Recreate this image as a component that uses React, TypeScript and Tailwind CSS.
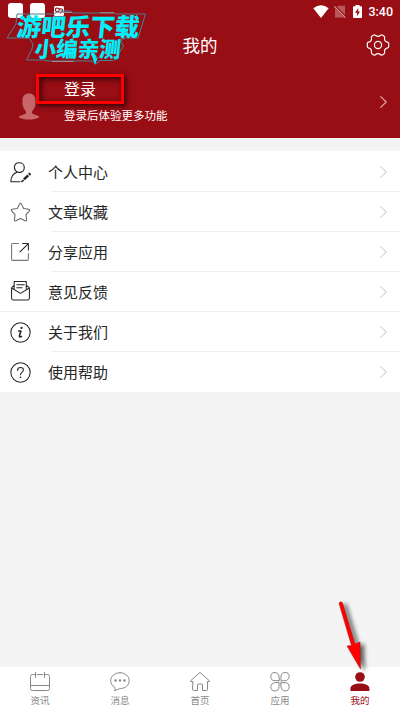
import React from 'react';

type IconProps = { className?: string };

const line = {
  fill: 'none',
  stroke: 'currentColor',
  strokeLinecap: 'round' as const,
  strokeLinejoin: 'round' as const,
};

const ProfileIcon: React.FC<IconProps> = ({ className }) => (
  <svg className={className} viewBox="0 0 20 20" {...line} strokeWidth="1.1">
    <path d="M7 9.5C5.2 8.6 4.2 7.2 4.2 5.2C4.2 2.5 6.2.7 8.9.7C11.6.7 13.6 2.6 13.6 5.2C13.6 8 11.6 9.9 8.9 9.9C8.2 9.9 7.6 9.8 7 9.5C3 11 .8 14 .8 18.8H9.5" />
    <path d="M13.3 16.6L17.3 12.8M18 12.1L19.4 10.8" strokeWidth="2.4" strokeLinecap="butt" />
    <path d="M11.2 18.6L12.6 17.4" strokeWidth="1.5" />
  </svg>
);

const StarIcon: React.FC<IconProps> = ({ className }) => (
  <svg className={className} viewBox="0 0 20 20" {...line} stroke="#666" strokeWidth="1">
    <path d="M9.2 1.8Q10 .7 10.8 1.8L13 6.2L17.8 7Q19.4 7.4 18.5 8.4L15.2 12L15.8 17Q15.8 18.4 14.5 17.9L10 15.8L5.5 17.9Q4.2 18.4 4.2 17L4.8 12L1.5 8.4Q.6 7.4 2.2 7L7 6.2Z" />
  </svg>
);

const ShareIcon: React.FC<IconProps> = ({ className }) => (
  <svg className={className} viewBox="0 0 20 20" {...line} strokeWidth="1">
    <path d="M8 1.5H2.5Q1.5 1.5 1.5 2.5V16.5Q1.5 17.5 2.5 17.5H16.5Q17.5 17.5 17.5 16.5V11" stroke="#777" />
    <path d="M9.5 9.5L17.5 1.5M12 1.5H17.5V7.5" />
  </svg>
);

const MailIcon: React.FC<IconProps> = ({ className }) => (
  <svg className={className} viewBox="0 0 20 20" {...line} strokeWidth="1">
    <path d="M4 7.5V.5H15.5V7.5M4 4L1.5 6.5V16.5Q1.5 18 3 18H17Q18.5 18 18.5 16.5V6.5L15.5 4M1.5 6.7L10 11.8L18.5 6.7M6.5 3.5H13.5M6.5 6.5H11.5" />
  </svg>
);

const InfoIcon: React.FC<IconProps> = ({ className }) => (
  <svg className={className} viewBox="0 0 20 20" {...line} strokeWidth="1">
    <circle cx="10" cy="10" r="9.2" />
    <path d="M8.3 8.5H10.4L8.9 13.5Q8.7 14.7 11 13.9" strokeWidth="1.5" />
    <circle cx="11" cy="5.6" r="1.1" fill="currentColor" stroke="none" />
  </svg>
);

const HelpIcon: React.FC<IconProps> = ({ className }) => (
  <svg className={className} viewBox="0 0 20 20" {...line} strokeWidth="1">
    <circle cx="10" cy="10" r="9.2" />
    <path d="M7.2 8Q7.2 5.2 10 5.2Q12.8 5.2 12.8 7.7C12.8 9.6 10 9.7 10 12.2" />
    <circle cx="10" cy="14.5" r=".8" fill="currentColor" stroke="none" />
  </svg>
);

const CalendarIcon: React.FC<IconProps> = ({ className }) => (
  <svg className={className} viewBox="0 0 20 20" {...line} strokeWidth="1">
    <path d="M4.5 2.5H2.5Q.5 2.5 .5 4.5V16.5Q.5 18.5 2.5 18.5H17.5Q19.5 18.5 19.5 16.5V4.5Q19.5 2.5 17.5 2.5H15.5M7 2.5H13M5.5.5V5.5M14.5.5V5.5M.5 13.5H19.5" />
  </svg>
);

const ChatIcon: React.FC<IconProps> = ({ className }) => (
  <svg className={className} viewBox="0 0 20 20" {...line} strokeWidth="1">
    <path d="M10 .7C15.2 .7 19.2 4.2 19.2 8.7C19.2 13.2 15.2 16.5 10.5 16.5C8 17.2 6.5 18.2 4.4 18.5C5 17.2 5.2 16.3 4.7 15.2C2.2 13.7 .7 11.5 .7 8.7C.7 4.2 4.8 .7 10 .7Z" />
    <g fill="currentColor" stroke="none">
      <circle cx="5.5" cy="8.5" r="1.2" />
      <circle cx="10" cy="8.5" r="1.2" />
      <circle cx="14.5" cy="8.5" r="1.2" />
    </g>
  </svg>
);

const HomeIcon: React.FC<IconProps> = ({ className }) => (
  <svg className={className} viewBox="0 0 20 20" {...line} strokeWidth="1">
    <path d="M2.5 9.5H.8Q0 9.5 .6 8.8L9.3 .9Q10 .4 10.7 .9L19.4 8.8Q20 9.5 19.2 9.5H17.5V17.5Q17.5 18.5 16.5 18.5H12.5V13Q12.5 12 11.5 12H8.5Q7.5 12 7.5 13V18.5H3.5Q2.5 18.5 2.5 17.5Z" />
  </svg>
);

const AppsIcon: React.FC<IconProps> = ({ className }) => (
  <svg className={className} viewBox="0 0 20 20" {...line} strokeWidth="1">
    <path d="M9 8.7H4.9A4.1 4.1 0 1 1 9 4.6Z M11 8.7V4.6A4.1 4.1 0 1 1 15.1 8.7Z M9 10.7V14.8A4.1 4.1 0 1 1 4.9 10.7Z M11 10.7H15.1A4.1 4.1 0 1 1 11 14.8Z" />
  </svg>
);

const UserIcon: React.FC<IconProps> = ({ className }) => (
  <svg className={className} viewBox="0 0 20 20" fill="currentColor">
    <circle cx="10" cy="5" r="4.8" />
    <path d="M.4 19V16.5C.4 13.3 5 11.5 10 11.5C15 11.5 19.4 13.3 19.4 16.5V19Z" />
  </svg>
);

const GearIcon: React.FC<IconProps> = ({ className }) => (
  <svg className={className} viewBox="0 0 24 24" {...line} strokeWidth="1.2">
    <circle cx="12" cy="12" r="3.6" />
    <path d="M7.6 2.1Q8.5 1.4 9.3 2.2Q12 4.6 14.7 2.2Q15.5 1.4 16.4 2.1L18.1 3.2Q18.9 3.8 18.6 4.8Q18 8.4 21.6 9.2Q22.7 9.5 22.7 10.5V13.5Q22.7 14.5 21.6 14.8Q18 15.6 18.6 19.2Q18.9 20.2 18.1 20.8L16.4 21.9Q15.5 22.6 14.7 21.8Q12 19.4 9.3 21.8Q8.5 22.6 7.6 21.9L5.9 20.8Q5.1 20.2 5.4 19.2Q6 15.6 2.4 14.8Q1.3 14.5 1.3 13.5V10.5Q1.3 9.5 2.4 9.2Q6 8.4 5.4 4.8Q5.1 3.8 5.9 3.2Z" />
  </svg>
);

const Chevron: React.FC<IconProps> = ({ className }) => (
  <svg className={className} viewBox="0 0 7 12" {...line} strokeWidth="1.1">
    <path d="M.7 .7L6.2 6L.7 11.3" />
  </svg>
);

const menu = [
  { label: '个人中心', Icon: ProfileIcon },
  { label: '文章收藏', Icon: StarIcon },
  { label: '分享应用', Icon: ShareIcon },
  { label: '意见反馈', Icon: MailIcon, fullDivider: true },
  { label: '关于我们', Icon: InfoIcon },
  { label: '使用帮助', Icon: HelpIcon },
];

const tabs = [
  { label: '资讯', Icon: CalendarIcon },
  { label: '消息', Icon: ChatIcon },
  { label: '首页', Icon: HomeIcon },
  { label: '应用', Icon: AppsIcon },
  { label: '我的', Icon: UserIcon, active: true },
];

const StatusBar = () => (
  <div className="flex h-6 items-start justify-between pt-[3px] pr-[7px] pl-2">
    <div className="flex gap-[7px]">
      <span className="size-[15px] rounded-[3px] bg-white" />
      <span className="size-[15px] rounded-[3px] bg-white" />
      <svg className="mt-[3px] ml-0.5 size-[10px]" viewBox="0 0 10 10">
        <rect width="10" height="10" rx="1.5" fill="#fff" />
        <path d="M4.5 5.5C1 7 .5 2 3 2Q5 2 6 4M5 4C7 1 10 4 8 6Q6 8 4 5" fill="none" stroke="#990d15" strokeWidth="1.2" />
      </svg>
    </div>
    <div className="flex items-center pt-px">
      <svg className="h-[13px] w-4" viewBox="0 0 16 13" fill="#fff">
        <path d="M8 13L.3 3.2Q8-2.6 15.7 3.2Z" />
      </svg>
      <svg className="ml-[5px] h-[13px] w-3" viewBox="0 0 12 13">
        <path d="M4 .8H11V12.5H1V4Z" fill="#fff" opacity=".3" />
        <path d="M.3 .8L11.7 12.5" stroke="#990d15" strokeWidth="2.5" />
        <path d="M.3 1.3L11.3 12.7" stroke="#d69c9f" strokeWidth="1.1" />
      </svg>
      <svg className="ml-[7px] h-[13px] w-[9px]" viewBox="0 0 9 13">
        <path d="M2.5 0H6.5V1.3H8Q9 1.3 9 2.3V12Q9 13 8 13H1Q0 13 0 12V2.3Q0 1.3 1 1.3H2.5Z" fill="#fff" />
        <path d="M5.3 3L2 7.8H4.1V11.3L7 6.5H5.1Z" fill="#990d15" />
      </svg>
      <span className="ml-1.5 font-['Roboto',sans-serif] text-[12.5px] leading-[15px] font-medium">3:40</span>
    </div>
  </div>
);

const Watermark = () => (
  <div className="absolute top-[10px] left-[6px] h-[56px] w-[142px] font-black whitespace-nowrap text-[#00f0fb]">
    <svg className="absolute inset-0 size-full" viewBox="0 0 142 56" fill="none" stroke="#4f7f92" strokeWidth="1">
      <path d="M11 4H48L52 1H64L67 3H92L96 2.5H107L110 4H139.5L132 28H119L114.5 31L117.5 36L113 43L112 49L106 50.5H94L90 54L86 51H42L38 50H20.5L26 39L27 34L23 28H1L8 17L10 14Z" />
      <path d="M50 2.5H66M94 3H108M46 51.5H68" stroke="#a48a94" />
    </svg>
    <span className="absolute top-[1px] left-[10.5px] -skew-x-6 text-[24.5px] leading-[29px]">游吧乐下载</span>
    <span className="absolute top-[25px] left-[28.5px] -skew-x-6 text-[21.5px] leading-[26px]">小编亲测</span>
    <svg className="absolute top-[43px] left-[85px] h-3 w-[7px]" viewBox="0 0 7 12" fill="currentColor">
      <path d="M0 0H3L5 5L7 4L4 12Z" />
    </svg>
  </div>
);

const Pointer = () => (
  <svg className="pointer-events-none absolute top-[590px] left-[325px] h-[90px] w-[60px] drop-shadow-[4px_2px_2px_rgba(0,0,0,0.6)]" viewBox="0 0 60 90">
    <path d="M14 13.2Q15.5 10.5 17.5 12.7L30 54L35 52L35.5 79L22 56L26.5 55.5Z" fill="#fe0000" stroke="#a91414" strokeWidth=".5" />
  </svg>
);

const App: React.FC = () => {
  return (
    <div className="relative flex h-[712px] w-[400px] flex-col overflow-hidden bg-[#f4f4f4] font-['Noto_Sans_CJK_SC',sans-serif]">
      <header className="h-[138px] shrink-0 bg-[#990d15] text-white">
        <StatusBar />
        <div className="grid h-[42px] grid-cols-[1fr_auto_1fr] items-center px-[10px]">
          <h1 className="col-start-2 text-[17.5px] leading-6 font-normal">我的</h1>
          <GearIcon className="size-6 justify-self-end" />
        </div>
        <div className="flex h-[72px] items-center pr-[13px] pl-[18px]">
          <svg className="mt-2 h-[27px] w-[22px] shrink-0" viewBox="0 0 22 27" fill="#c7676b">
            <path d="M11 .5C7 .5 4.5 3 4.5 7V11C4.7 14 6.5 17 8 18.5V20C6.5 22 2 22 .5 24C3 26 7 26.5 11 26.5C15 26.5 19 26 21.5 24C20 22 15.5 22 14 20V18.5C15.5 17 17.3 14 17.5 11V7C17.5 3 15 .5 11 .5Z" />
          </svg>
          <div className="mb-[4px] ml-6 flex flex-1 flex-col">
            <span className="text-base leading-6">登录</span>
            <span className="mt-[6px] text-[11.5px] leading-[18px]">登录后体验更多功能</span>
          </div>
          <Chevron className="h-3 w-[7px] text-[#e0b0b3]" />
        </div>
      </header>

      <main className="mt-[13px] flex flex-1 flex-col">
        <ul className="bg-white pt-px">
          {menu.map(({ label, Icon, fullDivider }, i) => (
            <li
              key={label}
              className={`flex h-10 items-center pl-[10px] text-[#262626] ${
                fullDivider ? 'border-b border-[#f0f0f0]' : ''
              }`}
            >
              <Icon className="size-[21px] shrink-0" />
              <div className="ml-[17px] flex h-full flex-1 flex-col">
                <div className="flex flex-1 items-center justify-between pr-[13px]">
                  <span className="text-[15px] leading-5">{label}</span>
                  <Chevron className="h-3 w-[7px] text-[#d5d5d5]" />
                </div>
                {i < menu.length - 1 && !fullDivider && <div className="ml-[3px] h-px bg-[#f0f0f0]" />}
              </div>
            </li>
          ))}
        </ul>
      </main>

      <nav className="grid h-[45px] shrink-0 grid-cols-5 bg-white">
        {tabs.map(({ label, Icon, active }) => (
          <div
            key={label}
            className={`flex flex-col items-center pt-[5px] ${active ? 'text-[#990d15]' : 'text-[#888888]'}`}
          >
            <Icon className="size-5" />
            <span className="mt-px text-[9.5px] leading-[14px]">{label}</span>
          </div>
        ))}
      </nav>

      <Watermark />
      <div className="absolute top-[74px] left-[36px] h-[30px] w-[88px] border-3 border-[#fe0000] shadow-[2px_2px_5px_rgba(0,0,0,0.7),inset_2px_2px_6px_rgba(0,0,0,0.7)]" />
      <Pointer />
    </div>
  );
};

export default App;
